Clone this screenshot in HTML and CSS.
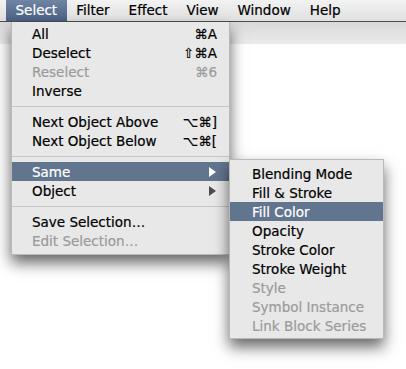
FILE: index.html
```html
<!DOCTYPE html>
<html>
<head>
<meta charset="utf-8">
<link rel="stylesheet" href="styles.css">
</head>
<body>
<div class="screen">
  <div class="menubar">
    <span class="mb-item mb-cut">Type</span>
    <span class="mb-item mb-active">Select</span>
    <span class="mb-item">Filter</span>
    <span class="mb-item">Effect</span>
    <span class="mb-item">View</span>
    <span class="mb-item">Window</span>
    <span class="mb-item">Help</span>
  </div>
  <div class="toolstrip"></div>
  <div class="canvas"></div>

  <div class="menu main-menu">
    <div class="row"><span class="label">All</span><span class="key">⌘A</span></div>
    <div class="row"><span class="label">Deselect</span><span class="key">⇧⌘A</span></div>
    <div class="row disabled"><span class="label">Reselect</span><span class="key">⌘6</span></div>
    <div class="row"><span class="label">Inverse</span></div>
    <div class="sep"></div>
    <div class="row"><span class="label">Next Object Above</span><span class="key">⌥⌘]</span></div>
    <div class="row"><span class="label">Next Object Below</span><span class="key">⌥⌘[</span></div>
    <div class="sep"></div>
    <div class="row hl"><span class="label">Same</span><span class="arrow"></span></div>
    <div class="row"><span class="label">Object</span><span class="arrow"></span></div>
    <div class="sep"></div>
    <div class="row"><span class="label">Save Selection…</span></div>
    <div class="row disabled"><span class="label">Edit Selection…</span></div>
  </div>

  <div class="menu sub-menu">
    <div class="row"><span class="label">Blending Mode</span></div>
    <div class="row"><span class="label">Fill &amp; Stroke</span></div>
    <div class="row hl"><span class="label">Fill Color</span></div>
    <div class="row"><span class="label">Opacity</span></div>
    <div class="row"><span class="label">Stroke Color</span></div>
    <div class="row"><span class="label">Stroke Weight</span></div>
    <div class="row disabled"><span class="label">Style</span></div>
    <div class="row disabled"><span class="label">Symbol Instance</span></div>
    <div class="row disabled"><span class="label">Link Block Series</span></div>
  </div>
</div>
</body>
</html>
```

FILE: styles.css
```css
html, body {
  margin: 0;
  padding: 0;
  background: #ffffff;
}

.screen {
  position: relative;
  width: 406px;
  height: 369px;
  overflow: hidden;
  font-family: "DejaVu Sans", "Liberation Sans", sans-serif;
  font-size: 13.5px;
  color: #000;
  -webkit-text-stroke: 0.2px currentColor;
}

.menubar {
  display: flex;
  height: 21px;
  background: linear-gradient(#f2f2f2, #e0e0e0);
  border-bottom: 1px solid #4e4e4e;
  align-items: stretch;
}

.mb-item {
  display: flex;
  align-items: center;
  padding: 0 9.5px;
  line-height: 21px;
  white-space: nowrap;
}

.mb-cut {
  margin-left: -43px;
  padding-right: 8.5px;
}

.mb-active {
  background: linear-gradient(#7084a4, #4b6184);
  color: #fff;
}

.toolstrip {
  height: 22px;
  background: linear-gradient(#d9d9d9, #ebebeb);
}

.canvas {
  height: 325px;
  background: #fff;
}

.menu {
  position: absolute;
  background: rgba(232, 232, 232, 0.98);
  border: 1px solid rgba(0, 0, 0, 0.2);
  box-shadow: 0 8px 14px rgba(0, 0, 0, 0.6);
  box-sizing: border-box;
}

.main-menu {
  left: 11px;
  top: 22px;
  width: 219px;
  padding: 2px 0 4px;
  border-top: none;
}

.sub-menu {
  left: 229px;
  top: 159px;
  width: 155px;
  padding: 4px 0 3px;
}

.row {
  display: flex;
  align-items: center;
  justify-content: space-between;
  height: 19px;
  padding: 0 12px 0 20px;
  white-space: nowrap;
}

.sub-menu .row {
  padding-left: 22px;
}

.row.disabled {
  color: #9b9b9b;
}

.row.hl {
  background: #62758f;
  color: #fff;
}

.key {
  text-align: right;
}

.arrow {
  width: 0;
  height: 0;
  border-top: 5px solid transparent;
  border-bottom: 5px solid transparent;
  border-left: 7px solid #4d4d4d;
  margin-right: 1px;
}

.row.hl .arrow {
  border-left-color: #fff;
}

.sep {
  height: 1px;
  margin: 6px 0 5px;
  background: #c6c6c6;
}
```
